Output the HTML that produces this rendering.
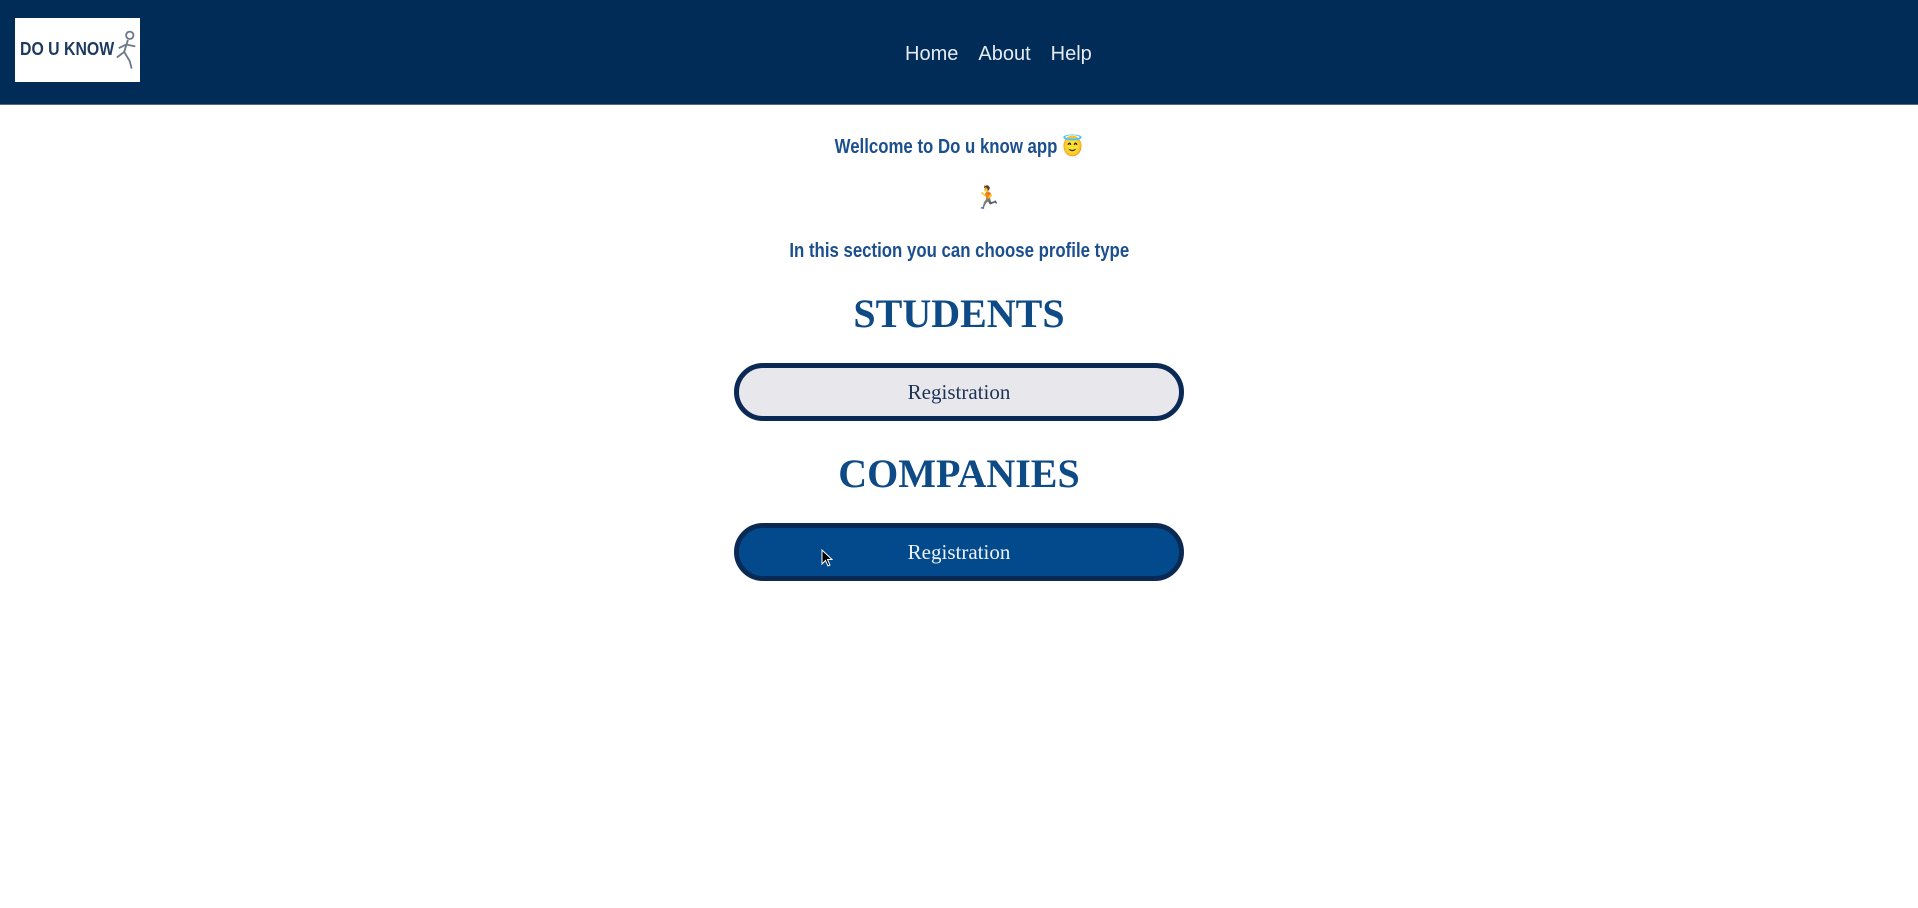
<!DOCTYPE html>
<html><head><meta charset="utf-8"><style>
html,body{margin:0;padding:0;width:1918px;height:908px;background:#fff;overflow:hidden;font-family:"Liberation Sans",sans-serif}
.hdr{position:absolute;left:0;top:0;width:1918px;height:104px;background:#012c57;border-bottom:1px solid #4d6a8a}
.logo{position:absolute;left:15px;top:18px;width:125px;height:64px;background:#fff}
.logo span{position:absolute;left:5px;top:21px;font:bold 18px "Liberation Sans Narrow","Liberation Sans",sans-serif;color:#1d3a5e;transform:scaleX(0.88);transform-origin:left}
.nav{position:absolute;top:43px;left:905px;font-size:20px;color:#e6ebf2}
.nav span{margin-right:20px}
.c{position:absolute;left:0;width:1918px;text-align:center}
.imp{font:bold 20px "Liberation Sans Narrow","Liberation Sans",sans-serif;color:#1b4f8d}
.sq{display:inline-block;transform:scaleX(0.84)}
h2{margin:0;font:bold 40px "Liberation Serif",serif;color:#0d4a86}
.btn{position:absolute;left:734px;width:440px;height:48px;border:5px solid #0a2a55;border-radius:30px;text-align:center;font:21px "Liberation Serif",serif;line-height:48px}
</style></head><body>
<div class="hdr">
 <div class="logo"><span>DO U KNOW</span>
 <svg style="position:absolute;left:100px;top:10px" width="24" height="46" viewBox="0 0 26 46"><g fill="none" stroke="#6d7a8a" stroke-width="2"><circle cx="16" cy="6" r="4"/><path d="M14 11 L10 24 L16 34 M12 16 L4 20 M12 16 L22 18 M10 24 L2 30 M16 34 L18 42"/></g></svg></div>
 <div class="nav"><span>Home</span><span>About</span><span>Help</span></div>
</div>
<div class="c imp" style="top:134px"><span class="sq">Wellcome to Do u know app 😇</span></div>
<div class="c" style="top:185px;left:29px;font-size:22px;color:#000">🏃</div>
<div class="c imp" style="top:240px"><span class="sq">In this section you can choose profile type</span></div>
<div class="c" style="top:290px"><h2>STUDENTS</h2></div>
<div class="btn" style="top:363px;background:#e8e7ec;color:#1e3354">Registration</div>
<div class="c" style="top:450px"><h2>COMPANIES</h2></div>
<div class="btn" style="top:523px;background:#024a8c;color:#eef2f8">Registration</div>
<svg style="position:absolute;left:821px;top:549px" width="12" height="18" viewBox="0 0 12 18"><path d="M1 1 L1 15 L4.5 11.5 L7 17 L9 16 L6.5 10.5 L11 10.5 Z" fill="#000" stroke="#fff" stroke-width="1"/></svg>
</body></html>
